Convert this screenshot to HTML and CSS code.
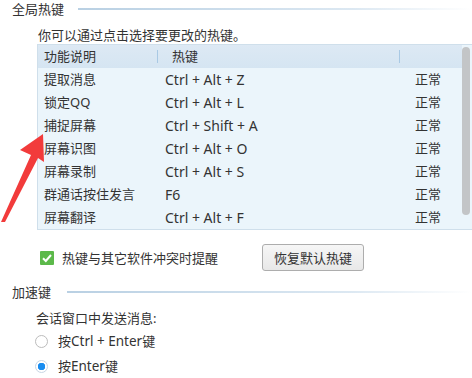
FILE: index.html
```html
<!DOCTYPE html>
<html lang="zh-CN">
<head>
    <meta charset="UTF-8">
    <title>热键设置</title>
    <link rel="stylesheet" href="styles.css">
</head>
<body>

<div class="panel">
    <div class="group-title">
        <span>全局热键</span>
        <div class="rule"></div>
    </div>

    <div class="hint">你可以通过点击选择要更改的热键。</div>

    <div class="table">
        <div class="list">
            <div class="row head">
                <div class="c1">功能说明</div>
                <div class="c2"><span class="sep"></span>热键</div>
                <div class="c3"><span class="sep"></span></div>
            </div>
            <div class="row"><div class="c1">提取消息</div><div class="c2">Ctrl + Alt + Z</div><div class="c3">正常</div></div>
            <div class="row"><div class="c1">锁定QQ</div><div class="c2">Ctrl + Alt + L</div><div class="c3">正常</div></div>
            <div class="row"><div class="c1">捕捉屏幕</div><div class="c2">Ctrl + Shift + A</div><div class="c3">正常</div></div>
            <div class="row"><div class="c1">屏幕识图</div><div class="c2">Ctrl + Alt + O</div><div class="c3">正常</div></div>
            <div class="row"><div class="c1">屏幕录制</div><div class="c2">Ctrl + Alt + S</div><div class="c3">正常</div></div>
            <div class="row"><div class="c1">群通话按住发言</div><div class="c2">F6</div><div class="c3">正常</div></div>
            <div class="row"><div class="c1">屏幕翻译</div><div class="c2">Ctrl + Alt + F</div><div class="c3">正常</div></div>
        </div>
        <div class="scroll"><div class="thumb"></div></div>
    </div>

    <div class="options">
        <label class="check">
            <span class="box">
                <svg width="14" height="14" viewBox="0 0 14 14"><path d="M3 7.2 L5.8 10 L11 4" fill="none" stroke="#fff" stroke-width="2"/></svg>
            </span>
            热键与其它软件冲突时提醒
        </label>
        <button class="btn">恢复默认热键</button>
    </div>

    <div class="group-title second">
        <span>加速键</span>
        <div class="rule"></div>
    </div>

    <div class="sub">会话窗口中发送消息:</div>
    <div class="radio"><span class="dot"></span>按<span class="latin">Ctrl + Enter</span>键</div>
    <div class="radio"><span class="dot on"></span>按<span class="latin">Enter</span>键</div>

    <svg class="arrow" width="50" height="100" viewBox="0 130 50 100">
        <polygon points="43,134 20,150 31,155 1,222 5,222 38,158 44,162" fill="#f23b3b"/>
    </svg>
</div>

</body>
</html>
```

FILE: styles.css
```css
body {
    margin: 0;
    background: #fff;
    color: #333;
    font-family: "Noto Sans", "Noto Sans CJK SC", sans-serif;
    font-size: 13px;
}
.panel {
    position: relative;
    width: 472px;
    height: 378px;
    overflow: hidden;
}
.group-title {
    display: flex;
    align-items: center;
    gap: 14px;
    height: 14px;
    padding: 2px 0 0 12px;
    line-height: 14px;
}
.group-title .rule {
    flex: 1;
    height: 2px;
    background: linear-gradient(to right, #b9d0e3, #dce8f2 70%, #fff);
}
.group-title.second {
    margin-top: 12px;
    gap: 16px;
}
.hint {
    padding: 11px 0 0 38px;
    height: 17px;
    line-height: 17px;
}
.table {
    display: flex;
    margin: 0 0 0 37px;
    height: 184px;
    border: 1px solid #cfdfeb;
    border-right: none;
    background: #ebf5fb;
}
.list {
    flex: 1;
}
.row {
    display: grid;
    grid-template-columns: 119px 242px 1fr;
    height: 23px;
    line-height: 23px;
}
.row.head {
    background: linear-gradient(#dde9f4, #d5e5f2);
}
.c1 {
    padding-left: 6px;
    white-space: nowrap;
}
.c2 {
    position: relative;
    padding-left: 8px;
    font-size: 14px;
}
.head .c2 {
    padding-left: 15px;
    font-size: 13px;
}
.c3 {
    position: relative;
    padding-left: 16px;
}
.sep {
    position: absolute;
    left: 0;
    top: 5px;
    width: 1px;
    height: 13px;
    background: #a9c9e4;
}
.scroll {
    width: 10px;
    padding: 2px 0 14px;
}
.thumb {
    width: 8px;
    height: 168px;
    border-radius: 4px;
    background: #c3c5c7;
}
.options {
    display: flex;
    align-items: center;
    margin-top: 14px;
    padding-left: 40px;
    height: 27px;
}
.check {
    display: flex;
    align-items: center;
    gap: 8px;
    width: 222px;
}
.box {
    width: 14px;
    height: 14px;
    border-radius: 1px;
    background: #5cb94a;
}
.box svg {
    display: block;
}
.btn {
    width: 102px;
    height: 27px;
    padding: 0;
    border: 1px solid #adadad;
    border-radius: 3px;
    background: linear-gradient(#f6f6f6, #e8e8e8);
    color: #333;
    font: inherit;
}
.sub {
    padding: 11px 0 0 36px;
    height: 16px;
    line-height: 16px;
}
.radio {
    display: flex;
    align-items: center;
    padding-left: 35px;
    margin-top: 7px;
    height: 16px;
    line-height: 16px;
}
.radio + .radio {
    margin-top: 9px;
}
.latin {
    font-size: 13.5px;
}
.dot {
    box-sizing: border-box;
    width: 13px;
    height: 13px;
    margin-right: 10px;
    border-radius: 50%;
    border: 1px solid #bcbcbc;
    background: #fff;
}
.dot.on {
    border-color: #c8d6e4;
    background: radial-gradient(circle, #1a8df0 0 3.5px, #fff 4px);
}
.arrow {
    position: absolute;
    left: 0;
    top: 130px;
}
```
